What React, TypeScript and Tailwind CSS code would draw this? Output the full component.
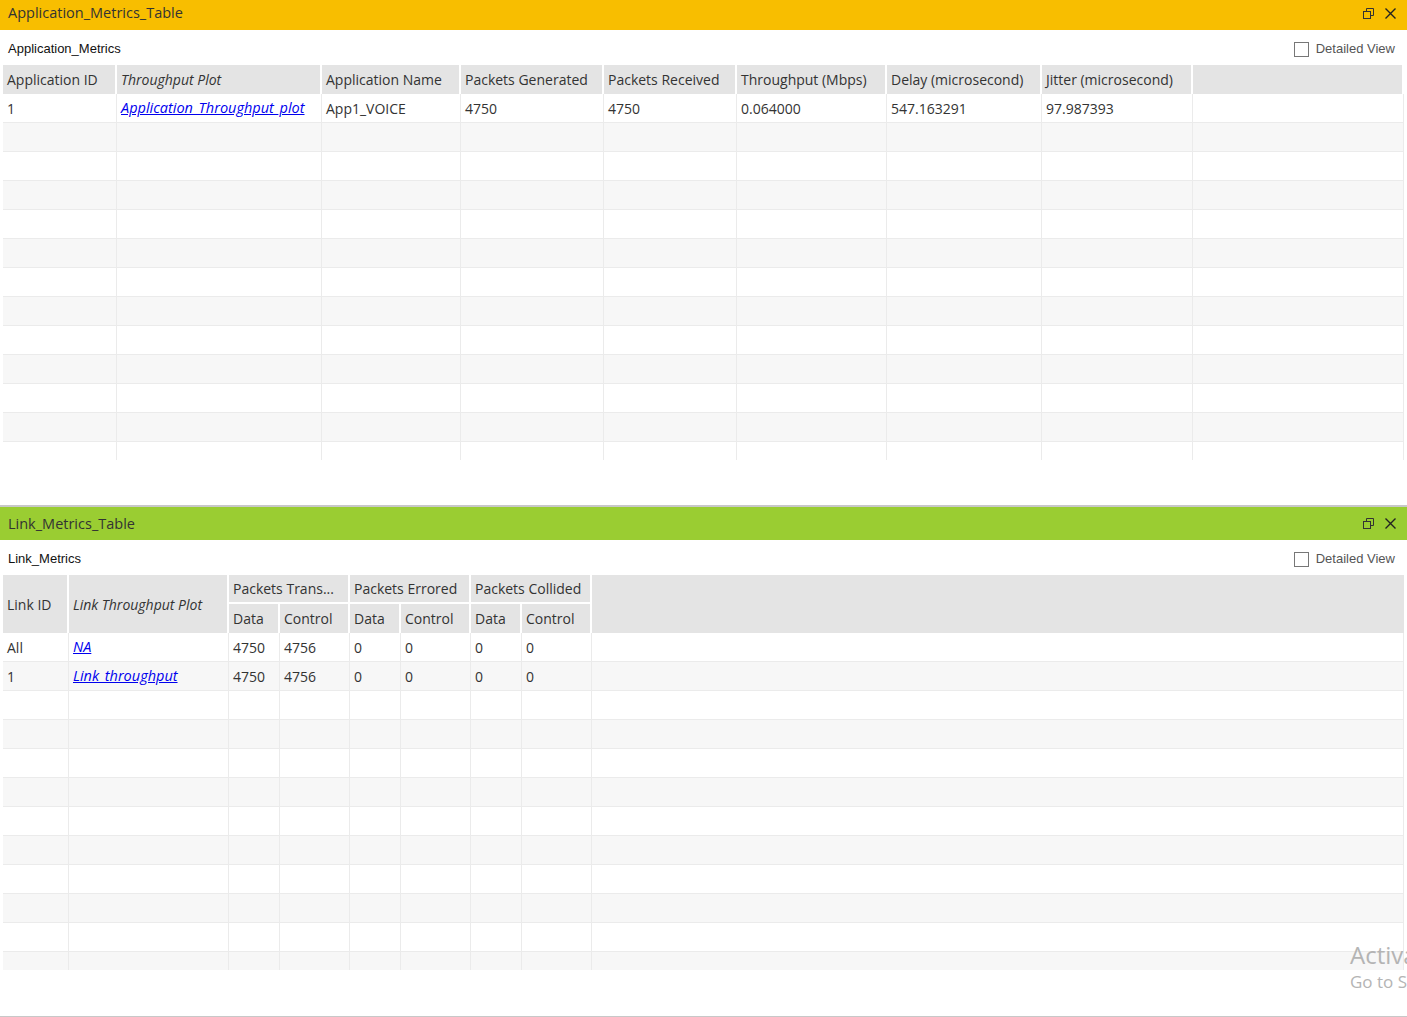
import React from "react";

const appCols = [114, 205, 139, 143, 133, 150, 155, 151, 211];
const appHeaders = [
  "Application ID",
  "Throughput Plot",
  "Application Name",
  "Packets Generated",
  "Packets Received",
  "Throughput (Mbps)",
  "Delay (microsecond)",
  "Jitter (microsecond)",
  "",
];
const appRow = ["1", "Application_Throughput_plot", "App1_VOICE", "4750", "4750", "0.064000", "547.163291", "97.987393", ""];

const linkCols = [66, 160, 51, 70, 51, 70, 51, 70, 812];
const linkRows = [
  ["All", "NA", "4750", "4756", "0", "0", "0", "0", ""],
  ["1", "Link_throughput", "4750", "4756", "0", "0", "0", "0", ""],
];

const font = { fontFamily: "'Open Sans', 'Noto Sans', sans-serif" };

function TitleBar({ title, lift }: { title: string; lift?: boolean }) {
  return (
    <div className={`flex items-center justify-between pl-2 pr-2 ${lift ? "pb-[4px]" : ""}`}>
      <span className="text-[14.5px] text-[#333]" style={font}>
        {title}
      </span>
      <div className="flex items-center gap-[11px] pr-[3px]">
        <svg width="11" height="11" viewBox="0 0 11 11" fill="none" stroke="#333" strokeWidth="1">
          <rect x="0.5" y="3.5" width="7" height="7" />
          <path d="M3.5 3.5V0.5H10.5V7.5H7.5" />
        </svg>
        <svg width="11" height="11" viewBox="0 0 11 11" fill="none" stroke="#222" strokeWidth="1.4">
          <path d="M0.5 0.5L10.5 10.5M10.5 0.5L0.5 10.5" />
        </svg>
      </div>
    </div>
  );
}

function SubBar({ label }: { label: string }) {
  return (
    <div className="flex h-[35px] items-center justify-between pl-2 pr-3 pt-[3px]" style={{ fontFamily: "'Liberation Sans', Arial, sans-serif" }}>
      <span className="text-[13px] text-[#111]">{label}</span>
      <label className="flex items-center gap-[7px] text-[13px] text-[#555]">
        <span className="inline-block h-[15px] w-[15px] border border-[#777] bg-white" />
        Detailed View
      </label>
    </div>
  );
}

function Cell({ w, children, link, bg }: { w: number; children?: React.ReactNode; link?: boolean; bg: string }) {
  return (
    <div
      className={`h-[29px] shrink-0 border-r border-b border-[#ebebeb] pl-1 flex items-center truncate ${bg}`}
      style={{ width: w }}
    >
      {link ? <span className="italic underline text-[#0000ee] text-[14.5px]">{children}</span> : children}
    </div>
  );
}

function AppTable() {
  const rows = Array.from({ length: 13 });
  return (
    <div className="ml-[3px] w-[1401px] text-[14px] text-[#333]" style={font}>
      <div className="flex h-[29px] bg-[#e4e4e4]">
        {appHeaders.map((h, i) => (
          <div
            key={i}
            className={`flex shrink-0 items-center border-r-2 border-white pl-1 ${i === 1 ? "italic" : ""}`}
            style={{ width: appCols[i] }}
          >
            {h}
          </div>
        ))}
      </div>
      <div className="h-[366px] overflow-hidden">
        {rows.map((_, r) => (
          <div key={r} className="flex">
            {appCols.map((w, c) => (
              <Cell key={c} w={w} link={r === 0 && c === 1} bg={r % 2 === 0 ? "bg-white" : "bg-[#f7f7f7]"}>
                {r === 0 ? appRow[c] : ""}
              </Cell>
            ))}
          </div>
        ))}
      </div>
    </div>
  );
}

function LinkTable() {
  const rows = Array.from({ length: 12 });
  const groups = ["Packets Trans...", "Packets Errored", "Packets Collided"];
  return (
    <div className="ml-[3px] w-[1401px] text-[14px] text-[#333]" style={font}>
      <div className="flex h-[58px] bg-[#e4e4e4]">
        <div className="flex shrink-0 items-center border-r-2 border-white pl-1" style={{ width: 66 }}>
          Link ID
        </div>
        <div className="flex shrink-0 items-center border-r-2 border-white pl-1 italic" style={{ width: 160 }}>
          Link Throughput Plot
        </div>
        {groups.map((g) => (
          <div key={g} className="flex shrink-0 flex-col border-r-2 border-white" style={{ width: 121 }}>
            <div className="flex h-[29px] items-center border-b-2 border-white pl-1 truncate">{g}</div>
            <div className="flex h-[29px]">
              <div className="flex w-[51px] items-center border-r-2 border-white pl-1">Data</div>
              <div className="flex flex-1 items-center pl-1">Control</div>
            </div>
          </div>
        ))}
        <div className="flex-1" />
      </div>
      <div className="h-[337px] overflow-hidden">
        {rows.map((_, r) => (
          <div key={r} className="flex">
            {linkCols.map((w, c) => (
              <Cell key={c} w={w} link={r < 2 && c === 1} bg={r % 2 === 0 ? "bg-white" : "bg-[#f7f7f7]"}>
                {r < 2 ? linkRows[r][c] : ""}
              </Cell>
            ))}
          </div>
        ))}
      </div>
    </div>
  );
}

export default function App() {
  return (
    <div className="relative h-[1017px] w-[1407px] overflow-hidden bg-white">
      <div className="h-[30px] flex flex-col justify-center bg-[#f8be00]">
        <TitleBar title="Application_Metrics_Table" lift />
      </div>
      <SubBar label="Application_Metrics" />
      <AppTable />
      <div className="h-[45px]" />
      <div className="h-[2px] bg-[#c8c8c8]" />
      <div className="h-[33px] flex flex-col justify-center bg-[#9acd32]">
        <TitleBar title="Link_Metrics_Table" />
      </div>
      <SubBar label="Link_Metrics" />
      <LinkTable />
      <div className="h-[46px]" />
      <div className="h-px bg-[#c8c8c8]" />
      <div
        className="pointer-events-none absolute left-[1350px] top-[940px] whitespace-nowrap text-[#b4b4b4]"
        style={{ fontFamily: "'Open Sans', sans-serif" }}
      >
        <div className="text-[24px] leading-[30px]">Activate Windows</div>
        <div className="text-[17px] leading-[24px]">Go to Settings to activate Windows.</div>
      </div>
    </div>
  );
}
